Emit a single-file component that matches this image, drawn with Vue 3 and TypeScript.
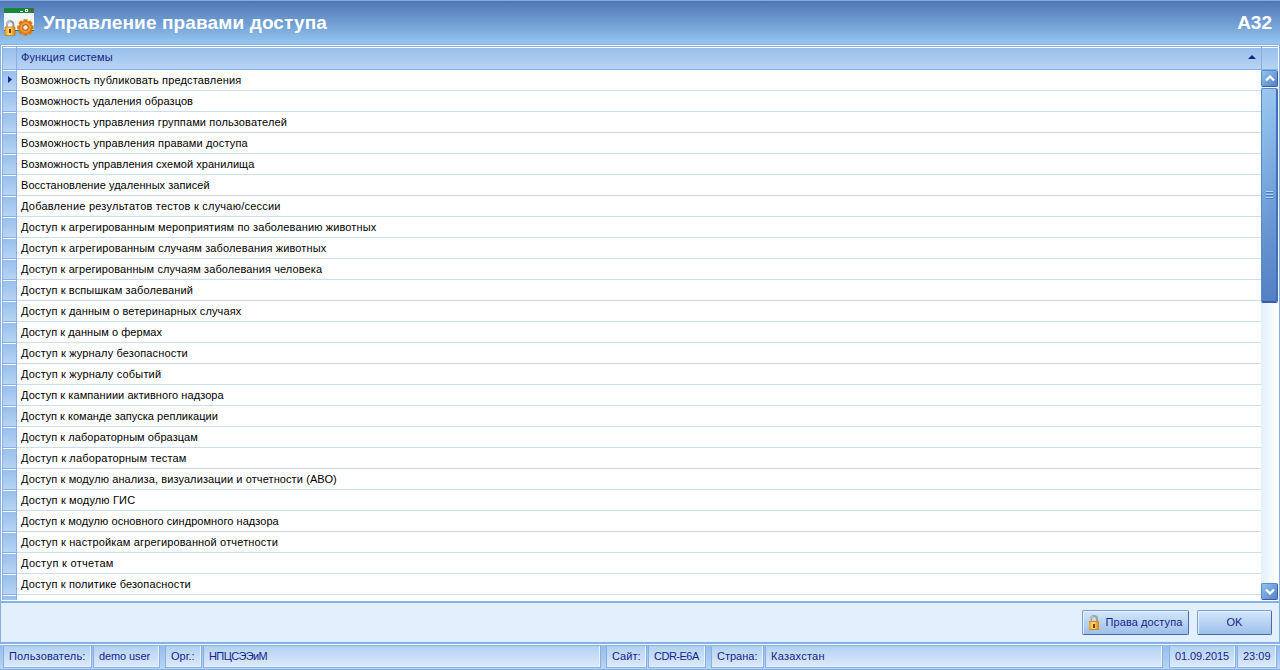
<script setup lang="ts">
interface Row { text: string; tracking: number }
interface StatusCell { text: string; width: number; gap: number; tracking: number }

const rows: Row[] = [
  { text: 'Возможность публиковать представления', tracking: 0.16 },
  { text: 'Возможность удаления образцов', tracking: 0.07 },
  { text: 'Возможность управления группами пользователей', tracking: 0.13 },
  { text: 'Возможность управления правами доступа', tracking: 0.14 },
  { text: 'Возможность управления схемой хранилища', tracking: 0.05 },
  { text: 'Восстановление удаленных записей', tracking: 0.05 },
  { text: 'Добавление результатов тестов к случаю/сессии', tracking: 0.23 },
  { text: 'Доступ к агрегированным мероприятиям по заболеванию животных', tracking: 0.125 },
  { text: 'Доступ к агрегированным случаям заболевания животных', tracking: 0.135 },
  { text: 'Доступ к агрегированным случаям заболевания человека', tracking: 0.1 },
  { text: 'Доступ к вспышкам заболеваний', tracking: 0.12 },
  { text: 'Доступ к данным о ветеринарных случаях', tracking: 0.13 },
  { text: 'Доступ к данным о фермах', tracking: 0.06 },
  { text: 'Доступ к журналу безопасности', tracking: 0.155 },
  { text: 'Доступ к журналу событий', tracking: 0.17 },
  { text: 'Доступ к кампаниии активного надзора', tracking: 0.07 },
  { text: 'Доступ к команде запуска репликации', tracking: 0.03 },
  { text: 'Доступ к лабораторным образцам', tracking: 0.065 },
  { text: 'Доступ к лабораторным тестам', tracking: 0.18 },
  { text: 'Доступ к модулю анализа, визуализации и отчетности (АВО)', tracking: 0.1 },
  { text: 'Доступ к модулю ГИС', tracking: 0.15 },
  { text: 'Доступ к модулю основного синдромного надзора', tracking: 0.055 },
  { text: 'Доступ к настройкам агрегированной отчетности', tracking: 0.155 },
  { text: 'Доступ к отчетам', tracking: 0.31 },
  { text: 'Доступ к политике безопасности', tracking: 0.13 },
  { text: '', tracking: 0 },
]

const status: StatusCell[] = [
  { text: 'Пользователь:', width: 89, gap: 0, tracking: 0.16 },
  { text: 'demo user', width: 67, gap: 1, tracking: -0.1 },
  { text: 'Орг.:', width: 37, gap: 5, tracking: 0.05 },
  { text: 'НПЦСЭЭиМ', width: 398, gap: 1, tracking: -0.6 },
  { text: 'Сайт:', width: 41, gap: 5, tracking: 0.05 },
  { text: 'CDR-E6A', width: 58, gap: 1, tracking: -0.5 },
  { text: 'Страна:', width: 53, gap: 5, tracking: 0 },
  { text: 'Казахстан', width: 398, gap: 1, tracking: 0.25 },
  { text: '01.09.2015', width: 67, gap: 6, tracking: -0.1 },
  { text: '23:09', width: 40, gap: 1, tracking: 0 },
]
</script>

<template>
  <div class="window">
    <header class="title-bar">
      <svg class="app-icon" width="32" height="30" viewBox="0 0 32 30">
        <defs>
          <linearGradient id="gold" x1="0" x2="1"><stop offset="0" stop-color="#f39b1d" /><stop offset=".45" stop-color="#ffe27a" /><stop offset="1" stop-color="#d97d0c" /></linearGradient>
        </defs>
        <path d="M0 1h30v22H0z" fill="#eef6fa" />
        <path d="M0 0h30v5H0z" fill="#16873a" />
        <path d="M16 3h3v1h-3zM21 1h3v3h-3z" fill="#dff4e2" /><path d="M22 2h1v1h-1z" fill="#16873a" />
        <path d="M26.5 1l3 3m0-3l-3 3" stroke="#d5281e" />
        <path d="M0 22h30v1H0z" fill="#16873a" />
        <path d="M3 20v-3.5a3.2 3.2 0 0 1 6.4 0V20" fill="none" stroke="#8f9698" stroke-width="2" />
        <path d="M3 19v-2.5a3 3 0 0 1 3-3" fill="none" stroke="#d9dddd" stroke-width=".8" />
        <path d="M1 19h10v8.5H1z" fill="url(#gold)" stroke="#c87912" stroke-width=".7" />
        <path d="M5 21h2v4H5z" fill="#724006" />
        <g transform="translate(21.5 19.5)">
          <g fill="#dd7610">
            <rect v-for="a in [0, 45, 90, 135]" :key="a" x="-2" y="-8.2" width="4" height="16.4" :transform="`rotate(${a})`" />
            <circle r="6.8" />
          </g>
          <circle r="5.4" fill="#f09a30" /><circle r="3.2" fill="#bb5c0e" /><circle r="2.2" fill="#e8eff4" />
        </g>
      </svg>
      <h1>Управление правами доступа</h1>
      <span class="code">A32</span>
    </header>

    <main class="grid-frame">
      <div class="grid-head">
        <div class="corner"></div>
        <div class="column-title"><span>Функция системы</span>
          <svg class="sort" width="8" height="4" viewBox="0 0 8 4"><path d="M0 4L4 0l4 4z" fill="#13258a" /></svg>
        </div>
        <div class="head-end"></div>
      </div>
      <div class="grid-body">
        <div class="rows">
          <div v-for="(row, i) in rows" :key="i" class="row">
            <div class="indicator">
              <svg v-if="i === 0" width="4" height="7" viewBox="0 0 4 7"><path d="M0 0l4 3.5L0 7z" fill="#13258a" /></svg>
            </div>
            <div class="cell" :style="{ letterSpacing: row.tracking + 'px' }">{{ row.text }}</div>
          </div>
        </div>
        <div class="scrollbar">
          <div class="scroll-button">
            <svg width="10" height="7" viewBox="0 0 10 7"><path d="M1 5.5l4-4 4 4" fill="none" stroke="#fff" stroke-width="2.2" /></svg>
          </div>
          <div class="thumb"><i></i><i></i><i></i></div>
          <div class="track"></div>
          <div class="scroll-button">
            <svg width="10" height="7" viewBox="0 0 10 7"><path d="M1 1.5l4 4 4-4" fill="none" stroke="#fff" stroke-width="2.2" /></svg>
          </div>
        </div>
      </div>
    </main>

    <section class="actions">
      <button class="rights">
        <svg width="10" height="15" viewBox="0 0 10 15">
          <path d="M2 7V4a3 3 0 0 1 6 0v3" fill="none" stroke="#9ba0a1" stroke-width="2" />
          <path d="M1.7 6V4A2.6 2.6 0 0 1 4 1.1" fill="none" stroke="#dedede" stroke-width=".7" />
          <path d="M0 6h10v9H0z" fill="url(#gold)" /><path d="M0 6h10v1H0zM0 14h10v1H0z" fill="#d58a24" />
          <path d="M4 9h2v4H4z" fill="#724006" />
        </svg>
        <span>Права доступа</span>
      </button>
      <button class="ok"><span>OK</span></button>
    </section>

    <footer class="status-bar">
      <div v-for="cell in status" :key="cell.text" class="status-cell" :style="{ width: cell.width + 'px', marginLeft: cell.gap + 'px', letterSpacing: cell.tracking + 'px' }">{{ cell.text }}</div>
    </footer>
  </div>
</template>

<style>
body { margin: 0; overflow: hidden; }
</style>

<style scoped>
* { box-sizing: border-box; }
.window { width: 1280px; height: 670px; display: flex; flex-direction: column; overflow: hidden; background: #fff; font: 11px/14px "Liberation Sans", Arial, sans-serif; color: #000; white-space: nowrap; }
.title-bar { height: 44px; flex: none; display: flex; align-items: center; padding: 0 8px 0 4px; border-top: 1px solid #81ade6; background: linear-gradient(#5077b5, #6f9dd2 50%, #96c7ef); color: #fff; }
.app-icon { margin-top: 1px; flex: none; }
h1, .code { margin: 0 0 0 7px; font-size: 19px; line-height: 24px; font-weight: bold; }
h1 { letter-spacing: .13px; }
.code { margin-left: auto; }
.grid-frame { height: 557px; flex: none; display: flex; flex-direction: column; border: 1px solid #86afe8; border-bottom: 0; padding: 1px 1px 1px; background: #fff; }
.grid-head { display: flex; height: 24px; flex: none; border-top: 1px solid #86afe8; border-bottom: 1px solid #86afe8; background: linear-gradient(#fff 1px, #98bfec 1px, #b8d4f2); }
.corner { width: 15px; border: solid #86afe8; border-width: 0 1px; }
.column-title { flex: 1; display: flex; align-items: center; padding: 0 5px 3px 4px; color: #13258a; letter-spacing: .13px; }
.sort { margin-left: auto; }
.head-end { width: 17px; border-left: 1px solid #86afe8; }
.grid-body { height: 530px; display: flex; overflow: hidden; }
.rows { flex: 1; }
.row { height: 21px; display: flex; }
.indicator { width: 15px; flex: none; display: flex; align-items: center; padding: 0 0 2px 5px; border: solid #86afe8; border-width: 0 1px 1px; background: linear-gradient(#fff 1px, #98bfec 1px, #b8d4f2); }
.cell { flex: 1; padding: 3px 0 0 4px; border-bottom: 1px solid #cbdcf5; }
.scrollbar { width: 17px; height: 530px; flex: none; display: flex; flex-direction: column; background: linear-gradient(90deg, #e2f0fd, #fff); }
.scroll-button { height: 17px; flex: none; display: flex; align-items: center; justify-content: center; border: 1px solid #598bc9; border-right-color: #3b5da9; border-bottom-color: #3b5da9; border-radius: 2px; background: linear-gradient(135deg, #90c2ee, #5681c7); }
.thumb { height: 215px; margin-top: 1px; flex: none; display: flex; flex-direction: column; align-items: center; justify-content: center; gap: 1px; border: 1px solid #568bcb; border-right: 2px solid #4a69b6; border-bottom: 2px solid #3d59aa; border-radius: 2px; background: linear-gradient(100deg, #ffffff22, #ffffff00 60%), linear-gradient(#8cc0ee, #5480c5); }
.thumb i { width: 7px; height: 2px; border-top: 1px solid #b8d7f4; border-bottom: 1px solid #4779be; }
.track { flex: 1; }
.actions { height: 43px; flex: none; display: flex; align-items: center; justify-content: flex-end; gap: 8px; padding: 0 7px 0 0; background: #e2f0fe; border: solid #86afe8; border-width: 2px 1px; }
button { height: 25px; padding: 0; display: flex; align-items: center; justify-content: center; border: 1px solid #7b9ed8; border-right-color: #4969af; border-bottom-color: #4969af; border-radius: 2px; background: linear-gradient(#d4e7fb, #9dbfea); box-shadow: inset 1px 1px #e5f2fe; color: #13258a; font: inherit; }
button span { padding-bottom: 2px; }
.rights { width: 107px; gap: 7px; letter-spacing: .08px; }
.ok { width: 75px; }
.status-bar { height: 26px; flex: none; display: flex; padding: 1px 3px 1px; border-top: 1px solid #fff; border-bottom: 1px solid #86afe8; background: linear-gradient(#94bce9, #b8d5f3); }
.status-cell { height: 23px; margin-top: -1px; flex: none; padding: 3px 0 0 5px; border: 1px solid #86afe8; background: linear-gradient(#b3d1f1, #dceafa); box-shadow: inset -1px -1px #ebf4fd; color: #13258a; }
</style>
